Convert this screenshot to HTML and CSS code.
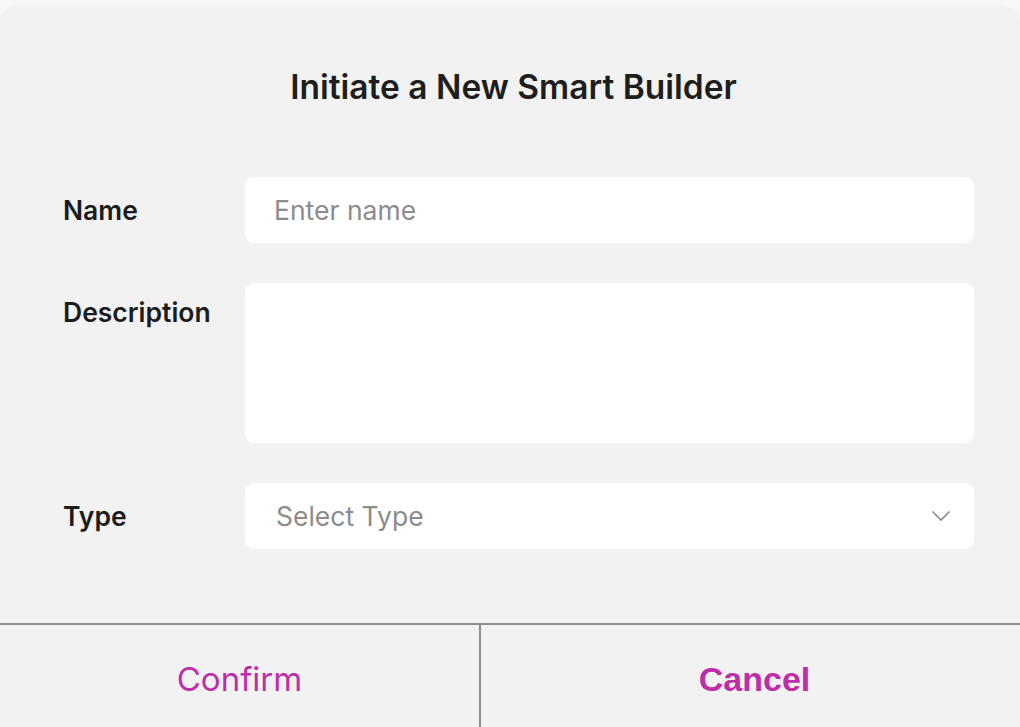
FILE: index.html
```html
<!DOCTYPE html>
<html lang="en">
<head>
<meta charset="utf-8">
<title>Initiate a New Smart Builder</title>
<link rel="stylesheet" href="styles.css">
</head>
<body>
<div class="dialog">
  <h1 class="title">Initiate a New Smart Builder</h1>
  <div class="form">
    <div class="row row-center">
      <label class="label">Name</label>
      <div class="field field-input"><span class="placeholder">Enter name</span></div>
    </div>
    <div class="row row-top">
      <label class="label label-top">Description</label>
      <div class="field field-area"></div>
    </div>
    <div class="row row-center">
      <label class="label">Type</label>
      <div class="field field-select">
        <span class="placeholder placeholder-select">Select Type</span>
        <svg class="chevron" width="20" height="12" viewBox="0 0 20 12"><polyline points="1.5,1.5 10,10 18.5,1.5" fill="none" stroke="#8a8a8a" stroke-width="1.6"/></svg>
      </div>
    </div>
  </div>
  <div class="footer">
    <button class="btn btn-confirm">Confirm</button>
    <button class="btn btn-cancel">Cancel</button>
  </div>
</div>
</body>
</html>
```
FILE: styles.css
```css
html, body {
  margin: 0;
  padding: 0;
  background: #f7f7f7;
  overflow: hidden;
}
body {
  font-family: Inter, "Liberation Sans", sans-serif;
  padding-top: 5px;
}
.dialog {
  background: #f2f2f2;
  border-radius: 22px 22px 0 0;
  height: 722px;
  display: flex;
  flex-direction: column;
  box-shadow: 0 0 3px rgba(0, 0, 0, 0.05);
}
.title {
  margin: 0;
  padding: 62px 0 0 7px;
  font-size: 33.5px;
  line-height: 40px;
  font-weight: 600;
  color: #1e1e1e;
  text-align: center;
}
.form {
  display: flex;
  flex-direction: column;
  gap: 40px;
  padding: 70px 46px 0 63px;
  flex: 1;
}
.row {
  display: flex;
}
.row-center {
  align-items: center;
}
.label {
  width: 182px;
  flex: none;
  font-size: 26.5px;
  font-weight: 600;
  color: #1c1c1c;
}
.label-top {
  padding-top: 13px;
}
.field {
  flex: 1;
  background: #ffffff;
  border-radius: 9px;
  display: flex;
  align-items: center;
  box-sizing: border-box;
}
.field-input, .field-select {
  height: 66px;
  padding-left: 29px;
}
.field-area {
  height: 160px;
}
.field-select {
  padding-left: 31px;
  padding-right: 23px;
  justify-content: space-between;
}
.placeholder {
  font-size: 26.5px;
  color: #8c8c8c;
}
.chevron {
  display: block;
}
.footer {
  display: flex;
  border-top: 2px solid #8e8e8e;
  height: 102px;
  flex: none;
}
.btn {
  flex: 1;
  background: none;
  border: none;
  padding: 6px 0 0;
  margin: 0;
  color: #bd2ea8;
}
.btn-confirm {
  font-family: Inter, "Liberation Sans", sans-serif;
  font-size: 33px;
  font-weight: 400;
  border-right: 2px solid #8e8e8e;
  flex: 0 0 481px;
}
.btn-cancel {
  font-family: "Liberation Sans", Arial, sans-serif;
  font-size: 34px;
  font-weight: 700;
  padding-left: 8px;
}
```
